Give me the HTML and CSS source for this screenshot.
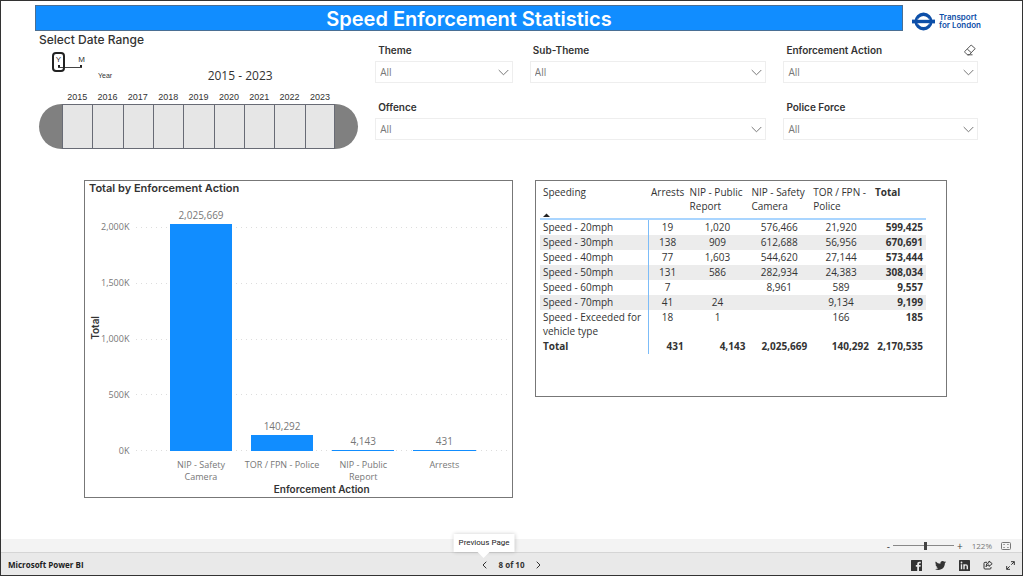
FILE: index.html
```
<!DOCTYPE html>
<html lang="en">
<head>
    <meta charset="UTF-8">
    <meta name="viewport" content="width=device-width, initial-scale=1.0">
    <title>Speed Enforcement Statistics</title>
    <link rel="stylesheet" href="styles.css">
</head>
<body>
    <main class="report">
        <header class="header">
            <h1>Speed Enforcement Statistics</h1>
            <div class="logo">
                <svg width="23" height="19" viewBox="0 0 23 19">
                    <circle cx="11.5" cy="9.5" r="7.3" fill="none" stroke="#0d4fa8" stroke-width="3.4"/>
                    <rect x="0" y="7.6" width="23" height="3.8" fill="#0d4fa8"/>
                    <path d="M5.5 7.2h12M5.5 11.8h12" stroke="#fff" stroke-width="0.8"/>
                </svg>
                <span>Transport<br>for London</span>
            </div>
        </header>

        <div class="controls">
            <section class="timeline">
                <h2>Select Date Range</h2>
                <div class="timeline-head">
                    <div class="granularity">
                        <button type="button" class="active">Y</button>
                        <button type="button">M</button>
                    </div>
                    <span class="granularity-name">Year</span>
                    <span class="range">2015 - 2023</span>
                </div>
                <div class="years">
                    <span>2015</span><span>2016</span><span>2017</span><span>2018</span><span>2019</span><span>2020</span><span>2021</span><span>2022</span><span>2023</span>
                </div>
                <div class="track">
                    <i></i><i></i><i></i><i></i><i></i><i></i><i></i><i></i><i></i>
                </div>
            </section>

            <form class="filters">
                <div class="filter">
                    <label for="theme">Theme</label>
                    <div class="dropdown">
                        <select id="theme"><option>All</option></select>
                        <svg width="11" height="7" viewBox="0 0 11 7"><path d="M0.7 1l4.8 4.8L10.3 1"/></svg>
                    </div>
                </div>
                <div class="filter">
                    <label for="subtheme">Sub-Theme</label>
                    <div class="dropdown">
                        <select id="subtheme"><option>All</option></select>
                        <svg width="11" height="7" viewBox="0 0 11 7"><path d="M0.7 1l4.8 4.8L10.3 1"/></svg>
                    </div>
                </div>
                <div class="filter">
                    <div class="filter-head">
                        <label for="action">Enforcement Action</label>
                        <button type="reset" aria-label="Clear selections">
                            <svg width="12" height="12" viewBox="0 0 12 12" fill="none" stroke="#555">
                                <path d="M7.2 1L11.2 4.6L5.2 10.8H3.4L0.8 8.2V7.4zM3.3 5.1L7.3 8.7M3.4 10.8H8.5"/>
                            </svg>
                        </button>
                    </div>
                    <div class="dropdown">
                        <select id="action"><option>All</option></select>
                        <svg width="11" height="7" viewBox="0 0 11 7"><path d="M0.7 1l4.8 4.8L10.3 1"/></svg>
                    </div>
                </div>
                <div class="filter wide">
                    <label for="offence">Offence</label>
                    <div class="dropdown">
                        <select id="offence"><option>All</option></select>
                        <svg width="11" height="7" viewBox="0 0 11 7"><path d="M0.7 1l4.8 4.8L10.3 1"/></svg>
                    </div>
                </div>
                <div class="filter">
                    <label for="force">Police Force</label>
                    <div class="dropdown">
                        <select id="force"><option>All</option></select>
                        <svg width="11" height="7" viewBox="0 0 11 7"><path d="M0.7 1l4.8 4.8L10.3 1"/></svg>
                    </div>
                </div>
            </form>
        </div>

        <div class="visuals">
            <section class="panel chart">
                <h2>Total by Enforcement Action</h2>
                <div class="chart-body">
                    <div class="y-title"><span>Total</span></div>
                    <div class="ticks">
                        <span>2,000K</span><span>1,500K</span><span>1,000K</span><span>500K</span><span>0K</span>
                    </div>
                    <div class="gridlines"><i></i><i></i><i></i><i></i><i></i></div>
                    <!-- bar heights are a share of 2,000K -->
                    <div class="bars">
                        <div class="column"><span>2,025,669</span><div class="bar" style="height: 101.3%"></div></div>
                        <div class="column"><span>140,292</span><div class="bar" style="height: 7%"></div></div>
                        <div class="column"><span>4,143</span><div class="bar" style="height: 0.2%"></div></div>
                        <div class="column"><span>431</span><div class="bar" style="height: 0.02%"></div></div>
                    </div>
                    <div class="categories">
                        <span>NIP - Safety Camera</span>
                        <span>TOR / FPN - Police</span>
                        <span>NIP - Public Report</span>
                        <span>Arrests</span>
                    </div>
                    <div class="x-title">Enforcement Action</div>
                </div>
            </section>

            <section class="panel matrix">
                <table>
                    <colgroup>
                        <col class="col-name"><col class="col-arrests"><col class="col-data"><col class="col-data"><col class="col-data"><col class="col-total">
                    </colgroup>
                    <thead>
                        <tr>
                            <th><div class="sorted">Speeding <svg width="7" height="4" viewBox="0 0 7 4"><path d="M0 4L3.5 0.5L7 4z" fill="#222"/></svg></div></th>
                            <th>Arrests</th>
                            <th>NIP - Public Report</th>
                            <th>NIP - Safety Camera</th>
                            <th>TOR / FPN - Police</th>
                            <th>Total</th>
                        </tr>
                    </thead>
                    <tbody>
                        <tr><td>Speed - 20mph</td><td>19</td><td>1,020</td><td>576,466</td><td>21,920</td><td>599,425</td></tr>
                        <tr><td>Speed - 30mph</td><td>138</td><td>909</td><td>612,688</td><td>56,956</td><td>670,691</td></tr>
                        <tr><td>Speed - 40mph</td><td>77</td><td>1,603</td><td>544,620</td><td>27,144</td><td>573,444</td></tr>
                        <tr><td>Speed - 50mph</td><td>131</td><td>586</td><td>282,934</td><td>24,383</td><td>308,034</td></tr>
                        <tr><td>Speed - 60mph</td><td>7</td><td></td><td>8,961</td><td>589</td><td>9,557</td></tr>
                        <tr><td>Speed - 70mph</td><td>41</td><td>24</td><td></td><td>9,134</td><td>9,199</td></tr>
                        <tr><td>Speed - Exceeded for vehicle type</td><td>18</td><td>1</td><td></td><td>166</td><td>185</td></tr>
                    </tbody>
                    <tfoot>
                        <tr><td>Total</td><td>431</td><td>4,143</td><td>2,025,669</td><td>140,292</td><td>2,170,535</td></tr>
                    </tfoot>
                </table>
            </section>
        </div>
    </main>

    <div class="zoom-bar">
        <button type="button" aria-label="Zoom out">-</button>
        <input type="range" min="0" max="100" value="54" aria-label="Zoom">
        <button type="button" aria-label="Zoom in">+</button>
        <span class="zoom-value">122%</span>
        <button type="button" aria-label="Fit to page">
            <svg width="10" height="8" viewBox="0 0 10 8" fill="none" stroke="#777">
                <rect x="0.5" y="0.5" width="9" height="7" rx="1"/>
                <path d="M2.5 3V2.5H4M6 2.5h1.5V3M2.5 5v0.5H4M6 5.5h1.5V5" stroke-width="0.7"/>
            </svg>
        </button>
    </div>

    <footer class="footer">
        <a href="#" class="brand">Microsoft Power BI</a>
        <nav class="pager">
            <button type="button" aria-label="Previous Page">
                <svg width="5" height="8" viewBox="0 0 5 8"><path d="M4.3 0.7L1 4l3.3 3.3"/></svg>
                <span class="tooltip">Previous Page</span>
            </button>
            <span>8 of 10</span>
            <button type="button" aria-label="Next Page">
                <svg width="5" height="8" viewBox="0 0 5 8"><path d="M0.7 0.7L4 4L0.7 7.3"/></svg>
            </button>
        </nav>
        <div class="social">
            <a href="#" aria-label="Facebook">
                <svg width="11" height="11" viewBox="0 0 11 11"><path fill="#333" d="M0.5 0h10a.5.5 0 0 1 .5.5v10a.5.5 0 0 1-.5.5H8V6.8h1.5L9.7 5H8V4.1q0-.8.8-.8h1V1.7H8.3Q6.2 1.7 6.2 3.8V5H4.8v1.8h1.4V11H.5a.5.5 0 0 1-.5-.5V.5A.5.5 0 0 1 .5 0z"/></svg>
            </a>
            <a href="#" aria-label="Twitter">
                <svg width="11" height="11" viewBox="0 0 24 24"><path fill="#333" d="M24 4.6a10 10 0 0 1-2.8.8 5 5 0 0 0 2.2-2.7 10 10 0 0 1-3.1 1.2 4.9 4.9 0 0 0-8.4 4.5A14 14 0 0 1 1.7 3.2a4.9 4.9 0 0 0 1.5 6.6 5 5 0 0 1-2.2-.6 4.9 4.9 0 0 0 3.9 4.9 5 5 0 0 1-2.2.1 4.9 4.9 0 0 0 4.6 3.4A9.900 9.900 0 0 1 0 19.500a14 14 0 0 0 7.500 2.200c9.100 0 14.300-7.700 14-14.600A10 10 0 0 0 24 4.600z"/></svg>
            </a>
            <a href="#" aria-label="LinkedIn">
                <svg width="11" height="11" viewBox="0 0 11 11">
                    <rect width="11" height="11" rx="0.6" fill="#333"/>
                    <path d="M2.5 4.3v5M5 9.3v-5M5 6.3Q5.2 4.9 6.8 4.9Q8.3 4.9 8.3 6.6v2.7" fill="none" stroke="#e9e9e9" stroke-width="1.4"/>
                    <circle cx="2.5" cy="2.5" r="0.9" fill="#e9e9e9"/>
                </svg>
            </a>
            <a href="#" aria-label="Share">
                <svg width="10" height="10" viewBox="0 0 10 10" fill="none" stroke="#333">
                    <path d="M4 2.3H2Q1 2.3 1 3.3V8Q1 9 2 9h5Q8 9 8 8V7"/>
                    <path d="M6 1l3.2 2.7L6 6.4V4.9Q3.9 4.8 3 6.8Q3 2.8 6 2.5z"/>
                </svg>
            </a>
            <a href="#" aria-label="Full screen">
                <svg width="9" height="9" viewBox="0 0 9 9" fill="none" stroke="#333">
                    <path d="M5 0.7h3.3V4M8.3 0.7L5.3 3.7M4 8.3H0.7V5M0.7 8.3l3-3"/>
                </svg>
            </a>
        </div>
    </footer>
</body>
</html>
```

FILE: styles.css
```
* {
    margin: 0;
    padding: 0;
    box-sizing: border-box;
}

body {
    font-family: 'Segoe UI', 'Open Sans', 'Noto Sans', sans-serif;
    font-size: 10px;
    line-height: 14px;
    color: #333;
    background: white;
    min-height: 100vh;
    display: flex;
    flex-direction: column;
    border: 1px solid #333;
}

svg {
    display: block;
}

button {
    background: none;
    border: none;
    font: inherit;
    color: inherit;
    cursor: pointer;
}

h1, h2, label, .x-title, .y-title {
    font-family: Bahnschrift, Inter, Roboto, sans-serif;
    font-weight: 600;
}

.report {
    flex: 1;
    padding: 4px 41px 20px 34px;
}

/* title bar */
.header {
    display: flex;
    align-items: center;
    gap: 9px;
}

h1 {
    flex: 1;
    background: #118dff;
    border: 1px solid #4a6f94;
    color: white;
    font-size: 20px;
    line-height: 24px;
    padding-top: 1px;
    height: 26px;
    text-align: center;
}

.logo {
    display: flex;
    align-items: center;
    gap: 4px;
    padding-top: 6px;
    color: #0d4fa8;
    font-family: Inter, sans-serif;
    font-size: 8px;
    font-weight: 600;
    line-height: 8px;
}

/* date range and filters */
.controls {
    display: grid;
    grid-template-columns: 9fr 17fr;
    gap: 17px;
    padding: 0 3px 0 4px;
}

.timeline h2 {
    font-size: 12px;
    font-weight: 500;
    line-height: 18px;
}

.timeline-head {
    display: flex;
    align-items: flex-end;
    gap: 10px;
    height: 35px;
    padding-left: 13px;
    font-family: 'Liberation Sans', Arial, sans-serif;
}

.granularity {
    display: flex;
    align-self: flex-start;
    gap: 10px;
    padding-top: 3px;
    background:
        linear-gradient(#222, #222) 6px 16px / 2px 2px no-repeat,
        linear-gradient(#222, #222) 28px 16px / 2px 2px no-repeat,
        linear-gradient(#444, #444) 6px 18px / 24px 1px no-repeat;
}

.granularity button {
    width: 13px;
    height: 20px;
    font-size: 8px;
    line-height: 12px;
    padding-bottom: 4px;
    border: 2px solid transparent;
}

.granularity .active {
    border-color: #222;
    border-radius: 4px;
}

.granularity-name {
    font-size: 7px;
    line-height: 16px;
}

.range {
    flex: 1;
    font-family: 'Segoe UI', 'Open Sans', sans-serif;
    font-size: 12px;
    line-height: 16px;
    text-align: center;
}

.years, .track {
    display: grid;
    grid-template-columns: repeat(9, 1fr);
    padding: 0 23px;
}

.years {
    font-family: 'Liberation Sans', Arial, sans-serif;
    font-size: 9px;
    text-align: center;
    margin-top: 6px;
}

.track {
    height: 45px;
    background: #808080;
    border-radius: 23px;
}

.track i {
    background: #e6e6e6;
    border: 1px solid #686b75;
    border-right: none;
}

.track i:last-child {
    border-right: 1px solid #686b75;
}

.filters {
    display: grid;
    grid-template-columns: 46fr 79fr 65fr;
    align-content: start;
    gap: 17px;
    padding-top: 12px;
}

.wide {
    grid-column: span 2;
}

label {
    display: block;
    padding-left: 3px;
    margin-bottom: 4px;
    font-size: 10px;
}

.filter-head {
    display: flex;
    justify-content: space-between;
    padding-right: 2px;
}

.filter-head button {
    height: 14px;
}

.dropdown {
    display: grid;
    align-items: center;
}

.dropdown select, .dropdown svg {
    grid-area: 1 / 1;
}

.dropdown select {
    appearance: none;
    width: 100%;
    height: 22px;
    padding-left: 4px;
    background: white;
    border: 1px solid #eee;
    color: #777;
    font: inherit;
}

.dropdown svg {
    justify-self: end;
    margin-right: 4px;
    fill: none;
    stroke: #777;
    pointer-events: none;
}

/* chart and table */
.visuals {
    display: grid;
    grid-template-columns: 51fr 49fr;
    align-items: start;
    gap: 22px;
    padding: 0 34px 0 49px;
    margin-top: 31px;
}

.panel {
    border: 1px solid #777;
}

.chart {
    padding: 0 5px 2px 4px;
}

.chart h2 {
    font-size: 11px;
    line-height: 14px;
}

.chart-body {
    display: grid;
    grid-template-columns: 12px auto 1fr;
    color: #777;
    font-size: 9px;
    padding-top: 10px;
}

.y-title {
    grid-area: 1 / 1;
    display: flex;
    align-items: center;
    justify-content: center;
    color: #333;
    font-size: 10px;
    line-height: 12px;
}

.y-title span {
    writing-mode: vertical-rl;
    transform: rotate(180deg);
}

.ticks, .gridlines {
    display: flex;
    flex-direction: column;
    justify-content: space-between;
    margin-top: 22px;
}

.ticks {
    grid-area: 1 / 2;
    text-align: right;
    padding-right: 7px;
}

.ticks span {
    margin: -7px 0;
}

.gridlines {
    grid-area: 1 / 3;
}

.gridlines i {
    height: 1px;
    background: repeating-linear-gradient(90deg, #ddd 0 1px, transparent 1px 5px);
}

.bars, .categories {
    display: grid;
    grid-template-columns: repeat(4, 1fr);
    padding: 0 22px 0 24px;
    text-align: center;
}

.bars {
    grid-area: 1 / 3;
    height: 224px;
    margin-top: 22px;
}

.column {
    display: flex;
    flex-direction: column;
    justify-content: flex-end;
    align-items: center;
    height: 224px;
    font-size: 10px;
}

.column span {
    margin-bottom: 2px;
}

.bar {
    flex: none;
    width: 77%;
    min-height: 1px;
    background: #118dff;
}

.categories {
    grid-area: 2 / 3;
    line-height: 12px;
    padding-top: 8px;
}

.categories span {
    padding: 0 2px;
}

.x-title {
    grid-area: 3 / 3;
    color: #333;
    font-size: 10px;
    line-height: 12px;
    text-align: center;
}

.matrix {
    min-height: 217px;
    padding: 4px 20px 4px 4px;
}

table {
    width: 100%;
    table-layout: fixed;
    border-collapse: collapse;
}

.col-name {
    width: 28%;
}

.col-arrests {
    width: 10%;
}

.col-data {
    width: 16%;
}

.col-total {
    width: 14%;
}

th {
    font-weight: 400;
    text-align: left;
    vertical-align: top;
    height: 34px;
    padding: 0 3px;
    border-bottom: 2px solid #a9d5ff;
}

th:last-child {
    font-weight: 700;
}

.sorted {
    display: flex;
    flex-direction: column;
    justify-content: space-between;
    height: 32px;
}

td {
    padding: 0 3px 1px;
    text-align: center;
    vertical-align: top;
}

td:first-child {
    text-align: left;
    border-right: 1px solid #7cbcf8;
}

td:last-child {
    font-weight: 700;
    text-align: right;
}

tbody tr:nth-child(even) {
    background: #ececec;
}

tfoot td {
    font-weight: 700;
    text-align: right;
}

/* zoom bar */
.zoom-bar {
    display: flex;
    align-items: center;
    justify-content: flex-end;
    gap: 3px;
    height: 14px;
    padding-right: 11px;
    background: #f3f3f3;
    border-bottom: 1px solid #d5d5d5;
    color: #444;
}

.zoom-bar input {
    appearance: none;
    width: 61px;
    height: 8px;
    background: linear-gradient(#888, #888) center / 100% 1px no-repeat;
}

.zoom-bar input::-webkit-slider-thumb {
    appearance: none;
    width: 3px;
    height: 8px;
    background: #444;
}

.zoom-value {
    margin: 0 6px;
    color: #777;
    font-size: 8px;
}

/* footer */
.footer {
    display: grid;
    grid-template-columns: 1fr auto 1fr;
    align-items: center;
    height: 22px;
    padding: 2px 7px 0;
    background: #e9e9e9;
    font-size: 8px;
    font-weight: 700;
}

.brand {
    color: #222;
    text-decoration: none;
}

.pager {
    display: flex;
    align-items: center;
    gap: 12px;
}

.pager button {
    position: relative;
}

.pager svg {
    fill: none;
    stroke: #333;
}

.tooltip {
    position: absolute;
    bottom: 17px;
    left: 50%;
    transform: translateX(-50%);
    padding: 2px 5px;
    background: white;
    box-shadow: 0 0 4px rgba(0,0,0,0.2);
    color: #222;
    font-family: Roboto, sans-serif;
    font-size: 8px;
    font-weight: 400;
    white-space: nowrap;
}

.tooltip::after {
    content: "";
    position: absolute;
    top: 100%;
    left: 50%;
    margin-left: -6px;
    border: 6px solid transparent;
    border-top-color: white;
    border-bottom: none;
}

.social {
    display: flex;
    align-items: center;
    justify-content: flex-end;
    gap: 13px;
}
```
